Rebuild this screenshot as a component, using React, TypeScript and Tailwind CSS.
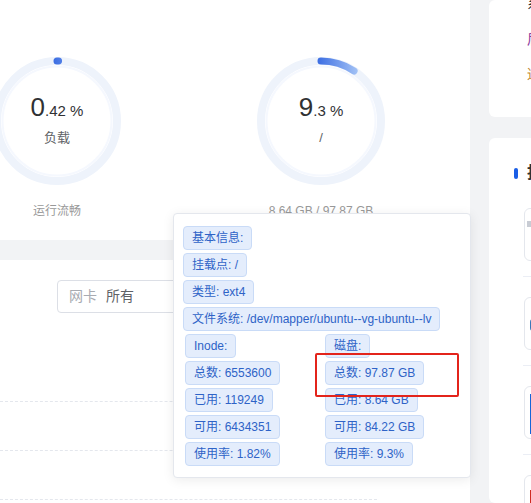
import React from "react";

type RingProps = { id: string; percent: number; whole: string; frac: string; label: string; foot: string };

function Ring({ id, percent, whole, frac, label, foot }: RingProps) {
    // arc drawn from the top, clockwise
    const a = (Math.PI * 2 * percent) / 100;
    const x = 64 + 60 * Math.sin(a);
    const y = 64 - 60 * Math.cos(a);
    return (
        <div className="flex w-[128px] flex-col items-center">
            <div className="relative h-[128px] w-[128px]">
                <svg width="128" height="128" viewBox="0 0 128 128" className="absolute inset-0">
                    <defs>
                        <linearGradient id={id} x1="60" y1="0" x2="104" y2="0" gradientUnits="userSpaceOnUse">
                            <stop offset="0" stopColor="#3a6ce2" />
                            <stop offset="1" stopColor="#abc9f7" />
                        </linearGradient>
                    </defs>
                    <circle cx="64" cy="64" r="60" fill="none" stroke="#eef3fb" strokeWidth="8" />
                    <circle cx="64" cy="64" r="54.5" fill="none" stroke="#f5f8fe" strokeWidth="2" />
                    <path
                        d={`M 64 4 A 60 60 0 0 1 ${x.toFixed(2)} ${y.toFixed(2)}`}
                        fill="none"
                        stroke={`url(#${id})`}
                        strokeWidth="7"
                        strokeLinecap="round"
                    />
                </svg>
                <div className="absolute inset-0 flex flex-col items-center pt-[35px]">
                    <div className="flex items-baseline text-[#303133]">
                        <span className="text-[26px] leading-[30px]">{whole}</span>
                        <span className="text-[15px]">{frac}</span>
                    </div>
                    <div className="mt-[7px] text-[13px] leading-[16px] text-[#606266]">{label}</div>
                </div>
            </div>
            <div className="mt-[19px] whitespace-nowrap text-[12px] leading-[14px] text-[#999999]">{foot}</div>
        </div>
    );
}

function Tag({ text }: { text: string }) {
    return (
        <div className="mb-[3px] flex">
            <span className="flex h-[24px] items-center whitespace-nowrap rounded-[4px] border border-[#c9dbf7] bg-[#e4edfc] px-[8px] text-[12px] text-[#2e63c7]">
                {text}
            </span>
        </div>
    );
}

export default function App() {
    const inodes = ["Inode:", "总数: 6553600", "已用: 119249", "可用: 6434351", "使用率: 1.82%"];
    const disk = ["磁盘:", "总数: 97.87 GB", "已用: 8.64 GB", "可用: 84.22 GB", "使用率: 9.3%"];

    return (
        <div className="relative flex h-[503px] w-[531px] gap-[19px] overflow-hidden bg-[#f2f3f5] font-['Liberation_Sans','Noto_Sans_CJK_SC',sans-serif]">
            {/* left column */}
            <div className="flex w-[470px] shrink-0 flex-col gap-[20px]">
                <div className="h-[240px] shrink-0 bg-white pt-[57px]">
                    <div className="ml-[-7px] flex gap-[136px]">
                        <Ring id="g1" percent={0.42} whole="0" frac=".42 %" label="负载" foot="运行流畅" />
                        <Ring id="g2" percent={9.3} whole="9" frac=".3 %" label="/" foot="8.64 GB / 97.87 GB" />
                    </div>
                </div>
                <div className="min-h-0 flex-1 overflow-hidden bg-white pt-[20px]">
                    <div className="ml-[57px] flex h-[33px] w-[200px] items-center rounded-[4px] border border-[#dcdfe6] px-[11px] text-[14px]">
                        <span className="text-[#a8abb2]">网卡</span>
                        <span className="ml-[9px] text-[#606266]">所有</span>
                    </div>
                    <div className="mt-[88px] w-[377px]">
                        <div className="h-[49px] border-t border-dashed border-[#e4e7ed]" />
                        <div className="h-[49px] border-t border-dashed border-[#e4e7ed]" />
                        <div className="h-[49px] border-t border-dashed border-[#e4e7ed]" />
                    </div>
                </div>
            </div>

            {/* right column */}
            <div className="flex w-[300px] shrink-0 flex-col gap-[21px]">
                <div className="h-[117px] shrink-0 rounded-[6px] bg-white pl-[38px] text-[14px] leading-[14px]">
                    <div className="mt-[-4px] text-[#303133]">系</div>
                    <div className="mt-[22px] text-[#8e3a9c]">后</div>
                    <div className="mt-[21px] text-[#c2872e]">适</div>
                </div>
                <div className="min-h-0 flex-1 overflow-hidden rounded-[6px] bg-white pl-[25px] pt-[27px]">
                    <div className="flex h-[16px] items-center">
                        <span className="h-[11px] w-[4px] rounded-full bg-[#1a5ee6]" />
                        <span className="ml-[9px] text-[16px] font-bold leading-[16px] text-[#303133]">指标</span>
                    </div>
                    <div className="ml-[9px] mt-[7px]">
                        <div className="border-b border-[#ebeef5] pb-[15px] pt-[20px]">
                            <div className="ml-[1px] h-[53px] w-[200px] rounded-[6px] border border-[#e4e7ed] pl-[2px] pt-[12px]">
                                <div className="h-[6px] w-[8px] bg-[#c8ccd4]" />
                            </div>
                        </div>
                        <div className="border-b border-[#ebeef5] pb-[15px] pt-[20px]">
                            <div className="ml-[1px] h-[53px] w-[200px] rounded-[6px] border border-[#e4e7ed] pl-[5px] pt-[21px]">
                                <div className="h-[12px] w-[14px] rounded-[3px] bg-[#3b78b8]" />
                            </div>
                        </div>
                        <div className="border-b border-[#ebeef5] pb-[15px] pt-[20px]">
                            <div className="ml-[1px] h-[53px] w-[200px] rounded-[6px] border border-[#e4e7ed] pl-[5px] pt-[7px]">
                                <div className="h-[40px] w-[30px] bg-[#1565d8]" />
                            </div>
                        </div>
                        <div className="pt-[20px]">
                            <div className="ml-[1px] h-[53px] w-[200px] rounded-[6px] border border-[#e4e7ed] pl-[5px] pt-[14px]">
                                <div className="h-[14px] w-[12px] bg-[#d02b22]" />
                            </div>
                        </div>
                    </div>
                </div>
            </div>

            {/* popover */}
            <div className="absolute left-[173px] top-[213px] w-[298px] rounded-[4px] border border-[#e4e7ed] bg-white px-[9px] pb-[8px] pt-[12px] shadow-[0_2px_12px_rgba(0,0,0,0.08)]">
                <Tag text="基本信息:" />
                <Tag text="挂载点: /" />
                <Tag text="类型: ext4" />
                <Tag text="文件系统: /dev/mapper/ubuntu--vg-ubuntu--lv" />
                <div className="grid grid-cols-[140px_1fr]">
                    <div className="pl-[2px]">
                        {inodes.map((t) => (
                            <Tag key={t} text={t} />
                        ))}
                    </div>
                    <div className="pl-[2px]">
                        {disk.map((t) => (
                            <Tag key={t} text={t} />
                        ))}
                    </div>
                </div>
                <div className="absolute left-[141px] top-[139px] h-[44px] w-[144px] rounded-[2px] border-2 border-[#e3241b]" />
            </div>
        </div>
    );
}
